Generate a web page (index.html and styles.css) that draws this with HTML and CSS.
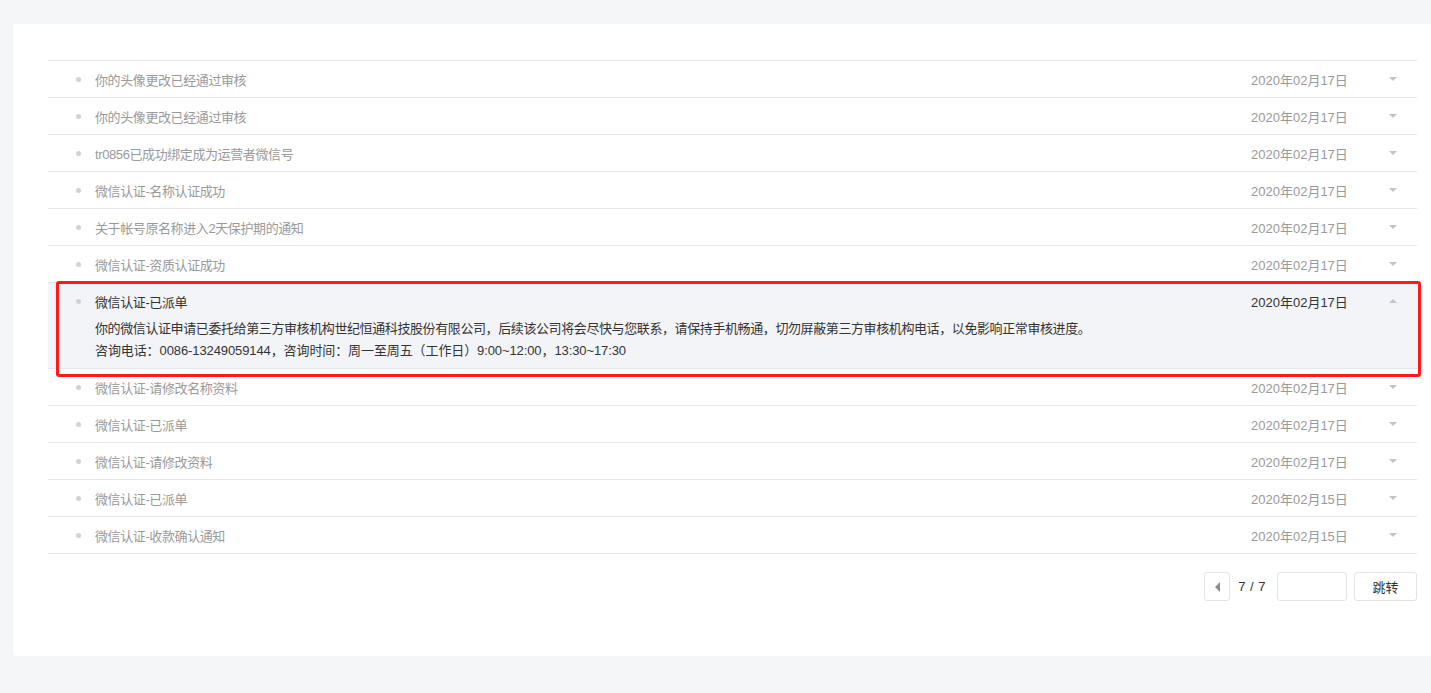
FILE: index.html
```html
<!DOCTYPE html>
<html lang="zh-CN">
<head>
    <meta charset="UTF-8">
    <meta name="viewport" content="width=device-width, initial-scale=1.0">
    <title>消息通知</title>
    <link rel="stylesheet" href="styles.css">
</head>
<body>
    <div class="card">
        <ul class="msg-list">
            <li class="msg"><div class="msg-head"><span class="dot"></span><span class="msg-title">你的头像更改已经通过审核</span><span class="msg-date">2020年02月17日</span><span class="arrow"></span></div></li>
            <li class="msg"><div class="msg-head"><span class="dot"></span><span class="msg-title">你的头像更改已经通过审核</span><span class="msg-date">2020年02月17日</span><span class="arrow"></span></div></li>
            <li class="msg"><div class="msg-head"><span class="dot"></span><span class="msg-title">tr0856已成功绑定成为运营者微信号</span><span class="msg-date">2020年02月17日</span><span class="arrow"></span></div></li>
            <li class="msg"><div class="msg-head"><span class="dot"></span><span class="msg-title">微信认证-名称认证成功</span><span class="msg-date">2020年02月17日</span><span class="arrow"></span></div></li>
            <li class="msg"><div class="msg-head"><span class="dot"></span><span class="msg-title">关于帐号原名称进入2天保护期的通知</span><span class="msg-date">2020年02月17日</span><span class="arrow"></span></div></li>
            <li class="msg"><div class="msg-head"><span class="dot"></span><span class="msg-title">微信认证-资质认证成功</span><span class="msg-date">2020年02月17日</span><span class="arrow"></span></div></li>
            <li class="msg open">
                <div class="msg-head"><span class="dot"></span><span class="msg-title">微信认证-已派单</span><span class="msg-date">2020年02月17日</span><span class="arrow"></span></div>
                <div class="msg-body">
                    <p class="msg-text">你的微信认证申请已委托给第三方审核机构世纪恒通科技股份有限公司，后续该公司将会尽快与您联系，请保持手机畅通，切勿屏蔽第三方审核机构电话，以免影响正常审核进度。</p>
                    <p class="msg-contact">咨询电话：0086-13249059144，咨询时间：周一至周五（工作日）9:00~12:00，13:30~17:30</p>
                </div>
                <div class="highlight"></div>
            </li>
            <li class="msg"><div class="msg-head"><span class="dot"></span><span class="msg-title">微信认证-请修改名称资料</span><span class="msg-date">2020年02月17日</span><span class="arrow"></span></div></li>
            <li class="msg"><div class="msg-head"><span class="dot"></span><span class="msg-title">微信认证-已派单</span><span class="msg-date">2020年02月17日</span><span class="arrow"></span></div></li>
            <li class="msg"><div class="msg-head"><span class="dot"></span><span class="msg-title">微信认证-请修改资料</span><span class="msg-date">2020年02月17日</span><span class="arrow"></span></div></li>
            <li class="msg"><div class="msg-head"><span class="dot"></span><span class="msg-title">微信认证-已派单</span><span class="msg-date">2020年02月15日</span><span class="arrow"></span></div></li>
            <li class="msg"><div class="msg-head"><span class="dot"></span><span class="msg-title">微信认证-收款确认通知</span><span class="msg-date">2020年02月15日</span><span class="arrow"></span></div></li>
        </ul>

        <div class="pager">
            <button class="pager-prev"><span class="tri-left"></span></button>
            <span class="pager-num">7 / 7</span>
            <input type="text" class="pager-input">
            <button class="pager-go">跳转</button>
        </div>
    </div>
</body>
</html>
```

FILE: styles.css
```css
body {
    margin: 0;
    padding: 24px 0 0 13px;
    background-color: #f5f6f8;
    font-family: "Liberation Sans", "Noto Sans CJK SC", sans-serif;
    font-size: 13px;
    color: #333;
    overflow: hidden;
}

.card {
    width: calc(100% + 10px);
    box-sizing: border-box;
    background-color: #fff;
    border-radius: 3px;
    box-shadow: 0 1px 2px rgba(0, 0, 0, 0.04);
    padding: 36px 24px 55px 35px;
}

.msg-list {
    list-style: none;
    margin: 0;
    padding: 0;
    border-top: 1px solid #e7e7eb;
}

.msg {
    position: relative;
    border-bottom: 1px solid #e7e7eb;
}

.msg-head {
    display: flex;
    align-items: center;
    height: 36px;
    color: #9a9a9a;
}

.dot {
    width: 5px;
    height: 5px;
    border-radius: 50%;
    background-color: #d2d2d2;
    margin: 0 14px 0 28px;
}

.msg-title {
    flex: 1;
    letter-spacing: -0.4px;
}

.msg-date {
    width: 100px;
}

.arrow {
    width: 0;
    height: 0;
    border-left: 4px solid transparent;
    border-right: 4px solid transparent;
    border-top: 4px solid #c4c4c4;
    margin: 0 20px 0 38px;
}

.msg.open {
    background-color: #f3f4f8;
    padding-bottom: 6px;
}

.msg.open .msg-head {
    color: #333;
}

.msg.open .arrow {
    border-top: none;
    border-bottom: 4px solid #c4c4c4;
}

.msg-body {
    padding-left: 47px;
    margin-top: -1px;
}

.msg-body p {
    margin: 0;
    line-height: 22px;
}

.msg-text {
    letter-spacing: -0.4px;
}

.msg-contact {
    letter-spacing: -0.1px;
}

/* red annotation box drawn over the opened message */
.highlight {
    position: absolute;
    left: 8px;
    top: -2px;
    right: -4px;
    bottom: -9px;
    border: 3px solid #ff1a1a;
    border-radius: 3px;
}

.pager {
    display: flex;
    justify-content: flex-end;
    align-items: center;
    margin-top: 18px;
}

.pager-prev {
    width: 26px;
    height: 29px;
    box-sizing: border-box;
    border: 1px solid #e4e4e4;
    border-radius: 3px;
    background-color: #fff;
    display: flex;
    align-items: center;
    justify-content: center;
    padding: 0;
}

.tri-left {
    width: 0;
    height: 0;
    border-top: 5px solid transparent;
    border-bottom: 5px solid transparent;
    border-right: 5px solid #8d8d8d;
}

.pager-num {
    margin: 0 11px 0 8px;
    letter-spacing: 0.5px;
    color: #333;
}

.pager-input {
    width: 70px;
    height: 29px;
    box-sizing: border-box;
    border: 1px solid #e4e4e4;
    border-radius: 3px;
    margin-right: 7px;
}

.pager-go {
    width: 63px;
    height: 29px;
    box-sizing: border-box;
    border: 1px solid #e4e4e4;
    border-radius: 3px;
    background-color: #fff;
    font-family: inherit;
    font-size: 13px;
    color: #333;
}
```
